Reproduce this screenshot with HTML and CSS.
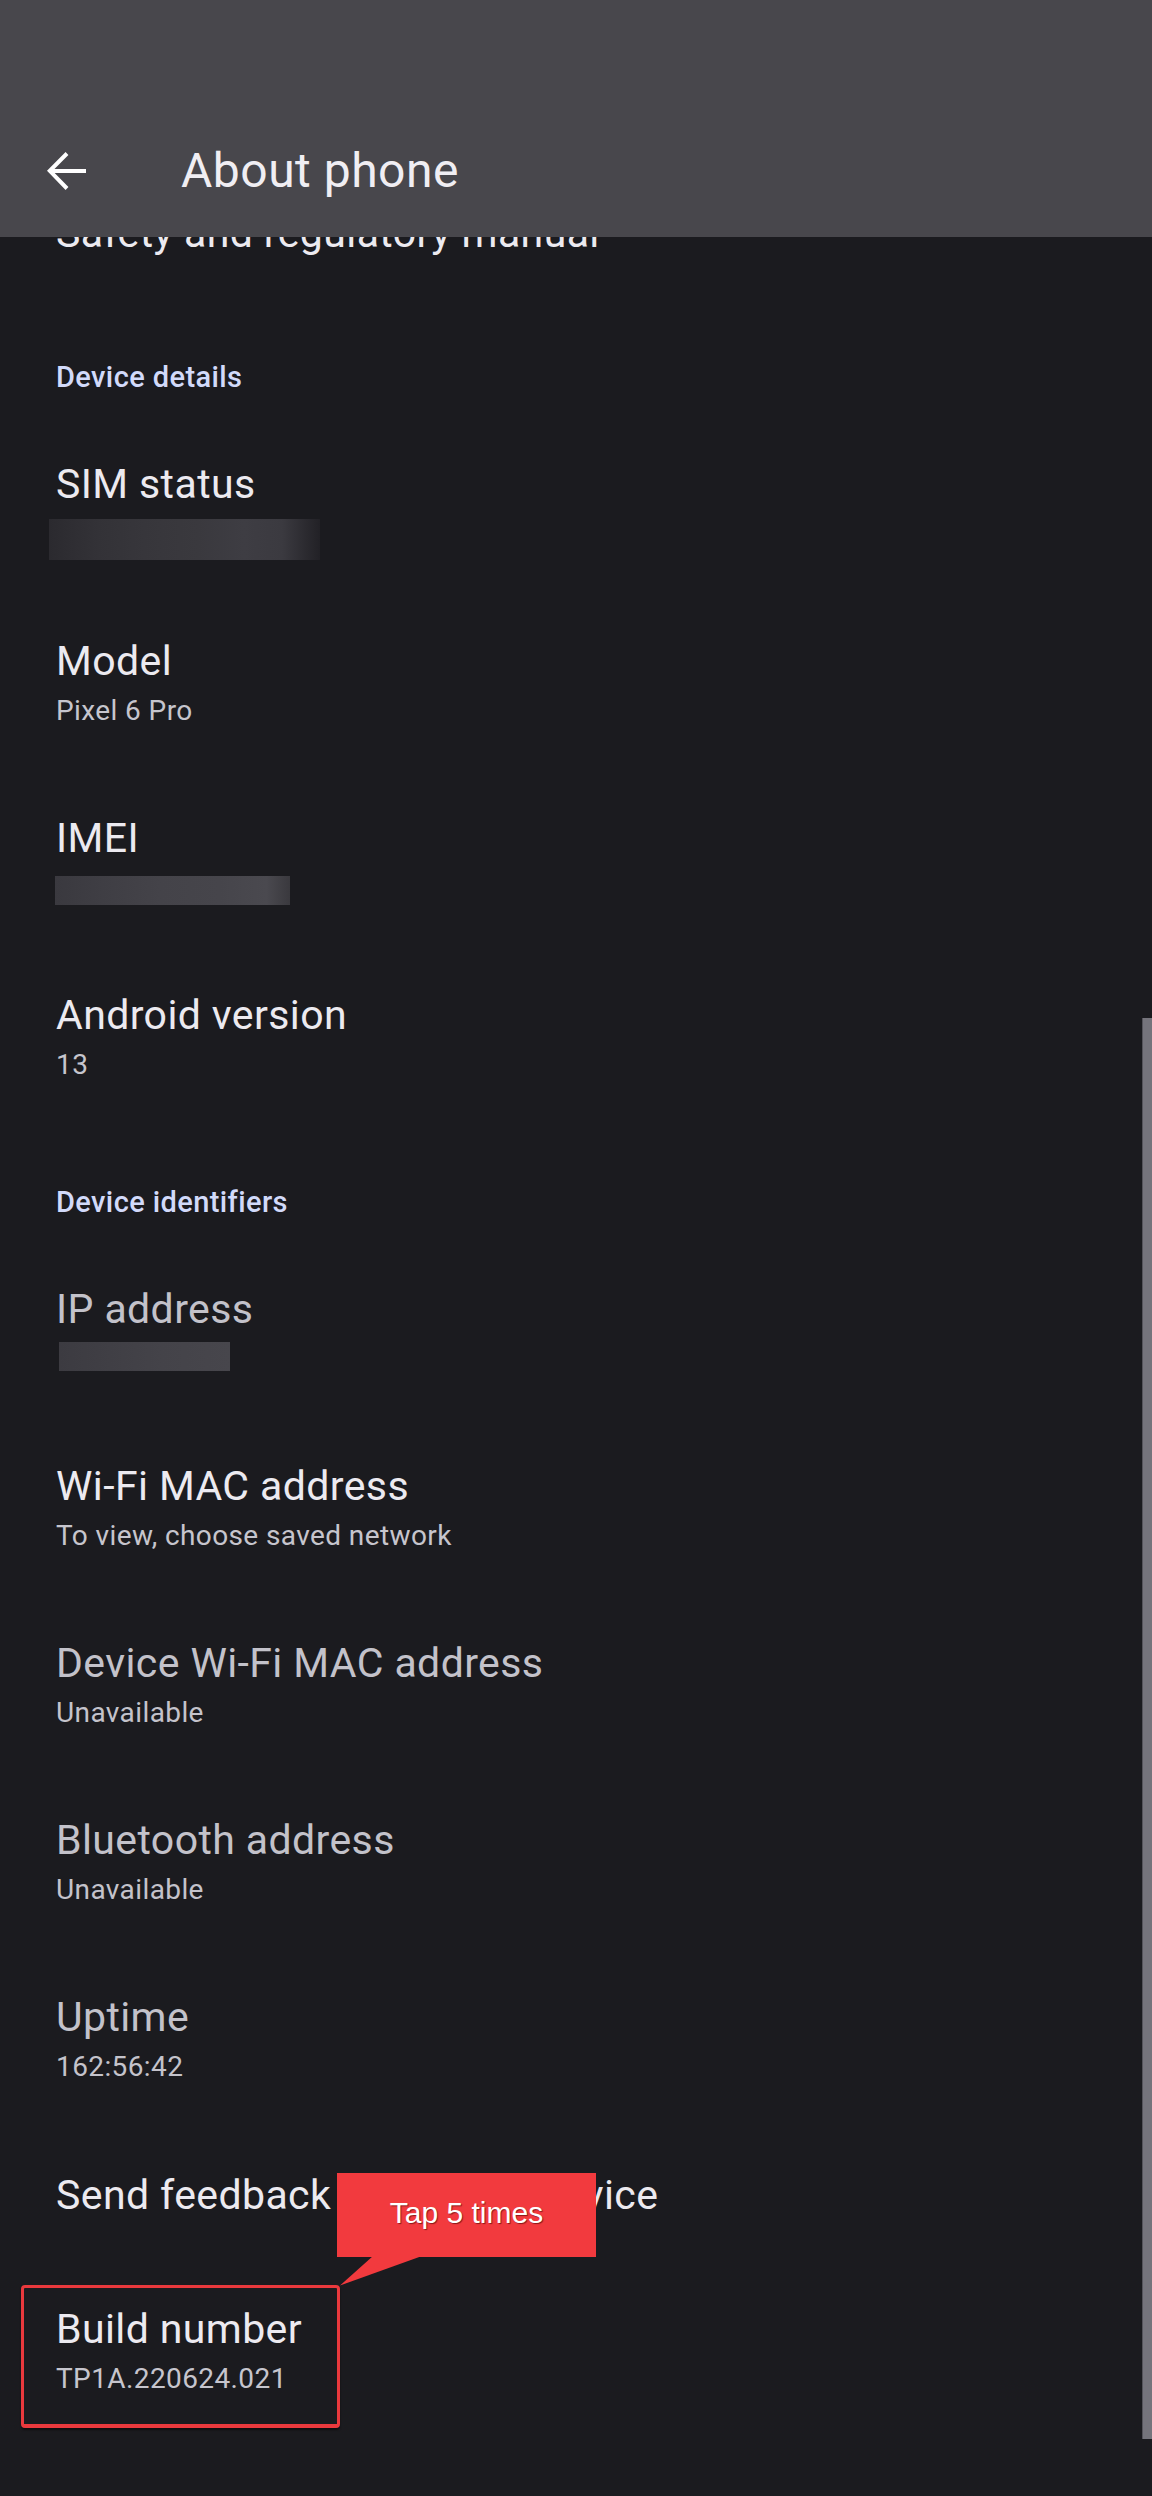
FILE: index.html
```html
<!DOCTYPE html>
<html lang="en">
<head>
<meta charset="utf-8">
<title>About phone</title>
<link rel="stylesheet" href="styles.css">
</head>
<body>
<div class="screen">
  <header class="appbar">
    <div class="appbar-row">
      <svg class="back" width="40" height="40" viewBox="0 0 40 40" aria-hidden="true">
        <path d="M2.5 20 H39" fill="none" stroke="#ffffff" stroke-width="4"/>
        <path d="M20 2.5 L2.8 19.8 L20 37.5" fill="none" stroke="#ffffff" stroke-width="4"/>
      </svg>
      <h1 class="title">About phone</h1>
    </div>
  </header>

  <main class="list">
    <div class="row single first"><div class="row-title">Safety and regulatory manual</div></div>

    <div class="category">Device details</div>

    <div class="row">
      <div class="row-title">SIM status</div>
      <div class="redact redact-sim"></div>
    </div>
    <div class="row">
      <div class="row-title">Model</div>
      <div class="row-summary">Pixel 6 Pro</div>
    </div>
    <div class="row">
      <div class="row-title">IMEI</div>
      <div class="redact redact-imei"></div>
    </div>
    <div class="row">
      <div class="row-title">Android version</div>
      <div class="row-summary">13</div>
    </div>

    <div class="category">Device identifiers</div>

    <div class="row disabled">
      <div class="row-title">IP address</div>
      <div class="redact redact-ip"></div>
    </div>
    <div class="row">
      <div class="row-title">Wi-Fi MAC address</div>
      <div class="row-summary">To view, choose saved network</div>
    </div>
    <div class="row disabled">
      <div class="row-title">Device Wi-Fi MAC address</div>
      <div class="row-summary">Unavailable</div>
    </div>
    <div class="row disabled">
      <div class="row-title">Bluetooth address</div>
      <div class="row-summary">Unavailable</div>
    </div>
    <div class="row disabled">
      <div class="row-title">Uptime</div>
      <div class="row-summary">162:56:42</div>
    </div>
    <div class="row single">
      <div class="row-title">Send feedback about this device</div>
    </div>
    <div class="row">
      <div class="row-title">Build number</div>
      <div class="row-summary">TP1A.220624.021</div>
    </div>
  </main>

  <div class="scroll-thumb"></div>

  <div class="highlight"></div>
  <svg class="callout-tail" width="90" height="32" viewBox="0 0 90 32" aria-hidden="true">
    <polygon points="36,0 85,0 3,29.5" fill="#f23a3e"/>
  </svg>
  <div class="callout">Tap 5 times</div>
</div>
</body>
</html>
```

FILE: styles.css
```css
* { box-sizing: border-box; }

html, body {
  margin: 0;
  padding: 0;
  background: #1b1b1f;
}

.screen {
  position: relative;
  width: 1152px;
  height: 2496px;
  overflow: hidden;
  background: #1b1b1f;
  font-family: Roboto, "Noto Sans", sans-serif;
  color: #e6e4ea;
}

/* App bar */
.appbar {
  position: relative;
  z-index: 2;
  height: 237px;
  padding: 143px 0 0 47px;
  background: #48474c;
}

.appbar-row {
  display: flex;
  align-items: center;
  height: 56px;
}

.back {
  flex: none;
  display: block;
}

.title {
  margin: 0 0 0 94px;
  font-size: 48px;
  line-height: 56px;
  font-weight: 400;
  letter-spacing: 0.5px;
  color: #f0eef3;
}

/* List */
.list {
  height: 2259px;
  overflow: hidden;
}

.row {
  display: flex;
  flex-direction: column;
  justify-content: center;
  padding: 43px 0 43px 56px;
}

.row.single {
  min-height: 135px;
  padding-top: 0;
  padding-bottom: 0;
}

.row.first {
  margin-top: -72px;
}

.row-title {
  font-size: 41px;
  line-height: 48px;
  letter-spacing: 0.4px;
  color: #eceaf0;
  white-space: nowrap;
}

.row-summary {
  margin-top: 9px;
  font-size: 28px;
  line-height: 34px;
  letter-spacing: 0.4px;
  color: #c6c5cd;
  white-space: nowrap;
}

.row.disabled .row-title {
  color: #c3c2ca;
}

.row.disabled .row-summary {
  color: #c4c3cb;
}

.category {
  padding: 60px 0 23px 56px;
  font-size: 29px;
  line-height: 34px;
  font-weight: 500;
  letter-spacing: 0.4px;
  color: #d2dafa;
}

/* Redacted (blurred) values */
.redact {
  flex: none;
}

.redact-sim {
  margin: 11px 0 -9px -7px;
  width: 271px;
  height: 41px;
  background: linear-gradient(90deg, #2b2a2f 0%, #333237 18%, #37363b 35%, #3a393e 55%, #3e3d43 72%, #3b3a40 86%, #222126 100%);
}

.redact-imei {
  margin: 14px 0 0 -1px;
  width: 235px;
  height: 29px;
  background: linear-gradient(90deg, #3a393f 0%, #3f3e44 20%, #444349 45%, #46454b 70%, #4a494f 90%, #3a393e 100%);
}

.redact-ip {
  margin: 9px 0 5px 3px;
  width: 171px;
  height: 29px;
  background: linear-gradient(90deg, #3c3b41 0%, #403f45 30%, #444349 60%, #47464c 100%);
}

/* Scrollbar */
.scroll-thumb {
  position: absolute;
  left: 1142px;
  top: 1018px;
  width: 10px;
  height: 1421px;
  background: #75747c;
  border-left: 1px solid #55545b;
}

/* Annotation overlay */
.highlight {
  position: absolute;
  left: 21px;
  top: 2285px;
  width: 319px;
  height: 143px;
  border: 3px solid #ea393d;
  border-bottom-width: 4px;
  border-radius: 4px;
  box-shadow: 0 2px 2px rgba(0, 0, 0, 0.55);
}

.callout {
  position: absolute;
  left: 337px;
  top: 2173px;
  width: 259px;
  height: 84px;
  display: flex;
  align-items: center;
  justify-content: center;
  padding-bottom: 4px;
  background: #f23a3e;
  font-family: "Liberation Sans", Arial, sans-serif;
  font-size: 30px;
  color: #ffffff;
  text-shadow: 1px 1px 1px rgba(70, 0, 0, 0.6);
}

.callout-tail {
  position: absolute;
  left: 337px;
  top: 2256px;
  display: block;
}
```
